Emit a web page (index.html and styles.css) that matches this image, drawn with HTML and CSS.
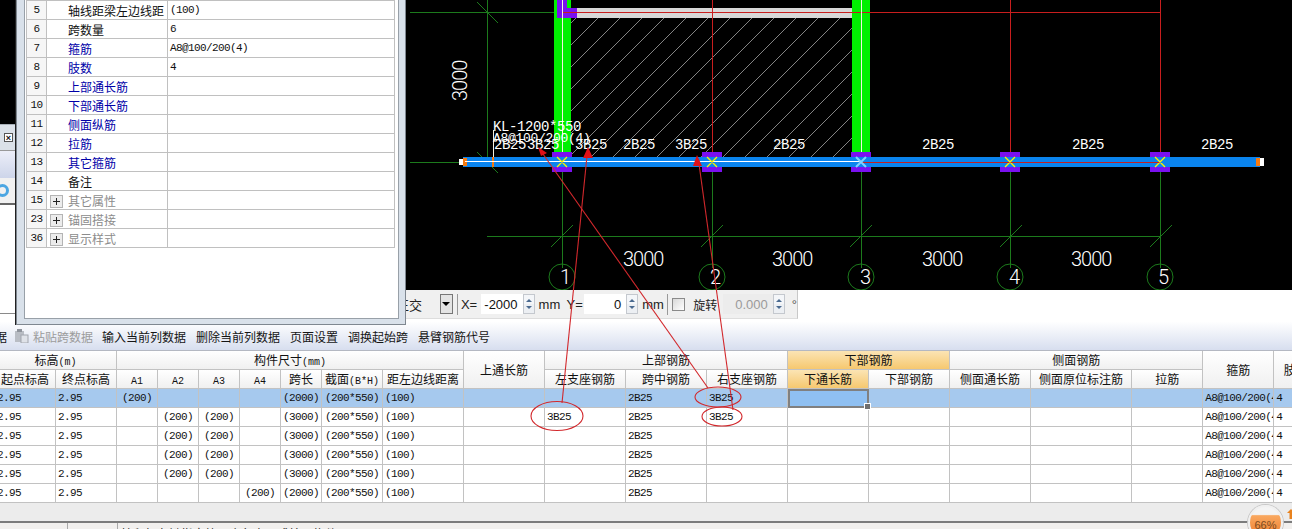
FILE: index.html
```html
<!DOCTYPE html>
<html lang="zh-CN">
<head>
    <meta charset="UTF-8">
    <title>梁平法表格</title>
    <link rel="stylesheet" href="styles.css">
</head>
<body>
    <div class="page">
        <!-- CAD view -->
        <svg class="cad" width="1292" height="290" viewBox="0 0 1292 290">
            <defs>
                <pattern id="hatch" patternUnits="userSpaceOnUse" width="22" height="22">
                    <line class="hatch-line" x1="0" y1="22" x2="22" y2="0"/>
                </pattern>
            </defs>

            <rect x="571" y="18" width="281" height="139" fill="url(#hatch)"/>

            <!-- axis lines -->
            <g class="axis">
                <line x1="487" y1="0" x2="487" y2="162"/>
                <line x1="410" y1="12" x2="562" y2="12"/>
                <line x1="410" y1="162" x2="460" y2="162"/>
                <line x1="562" y1="172" x2="562" y2="268"/>
                <line x1="712" y1="172" x2="712" y2="268"/>
                <line x1="861" y1="172" x2="861" y2="268"/>
                <line x1="1010" y1="172" x2="1010" y2="268"/>
                <line x1="1160" y1="172" x2="1160" y2="268"/>
                <line x1="487" y1="236" x2="1160" y2="236"/>
                <line x1="477" y1="2" x2="498" y2="23"/>
                <line x1="477" y1="152" x2="498" y2="173"/>
                <line x1="551" y1="247" x2="573" y2="225"/>
                <line x1="701" y1="247" x2="723" y2="225"/>
                <line x1="850" y1="247" x2="872" y2="225"/>
                <line x1="1000" y1="247" x2="1022" y2="225"/>
                <line x1="1150" y1="247" x2="1172" y2="225"/>
                <circle cx="562" cy="277" r="13"/>
                <circle cx="712" cy="277" r="13"/>
                <circle cx="861" cy="277" r="13"/>
                <circle cx="1010" cy="277" r="13"/>
                <circle cx="1160" cy="277" r="13"/>
            </g>

            <!-- columns and top beam -->
            <rect class="wall" x="554" y="0" width="17" height="157"/>
            <rect class="wall" x="852" y="0" width="18" height="157"/>
            <rect class="band" x="577" y="8" width="275" height="10"/>
            <rect class="post" x="557" y="8" width="20" height="10"/>
            <rect class="post" x="557" y="0" width="5" height="18"/>
            <rect class="post" x="563" y="0" width="4" height="8"/>
            <g class="red">
                <line x1="562" y1="12" x2="1160" y2="12"/>
                <line x1="712" y1="0" x2="712" y2="157"/>
                <line x1="1010" y1="0" x2="1010" y2="157"/>
                <line x1="1160" y1="0" x2="1160" y2="157"/>
            </g>
            <g class="white-line">
                <line x1="562" y1="0" x2="562" y2="157"/>
                <line x1="861" y1="0" x2="861" y2="157"/>
                <line x1="493" y1="130" x2="493" y2="157"/>
            </g>

            <!-- bottom beam -->
            <g class="post">
                <rect x="552" y="152" width="20" height="20"/>
                <rect x="702" y="152" width="20" height="20"/>
                <rect x="851" y="152" width="20" height="20"/>
                <rect x="1000" y="152" width="20" height="20"/>
                <rect x="1150" y="152" width="20" height="20"/>
            </g>
            <rect class="beam" x="463" y="157" width="797" height="10"/>
            <rect class="white-fill" x="459" y="159" width="4" height="6"/>
            <rect class="white-fill" x="1260" y="158" width="4" height="8"/>
            <rect class="orange" x="463" y="158" width="4" height="8"/>
            <rect class="orange" x="1256" y="158" width="4" height="8"/>
            <rect class="orange" x="492" y="157" width="2" height="10"/>
            <line class="white-line-thick" x1="465" y1="161.5" x2="861" y2="161.5"/>
            <g class="red">
                <line x1="861" y1="162" x2="1160" y2="162"/>
            </g>
            <path class="cross" d="M557 157l10 10m0-10l-10 10M707 157l10 10m0-10l-10 10M1005 157l10 10m0-10l-10 10M1155 157l10 10m0-10l-10 10"/>
            <path class="cross-blue" d="M856 157l10 10m0-10l-10 10"/>

            <!-- labels -->
            <text class="lbl" x="493" y="131">KL-1200*550</text>
            <text class="lbl lbl-sm" x="493" y="142">A8@100/200(4)</text>
            <text class="lbl" x="494" y="149">2B25</text>
            <text class="lbl" x="527" y="149">3B25</text>
            <text class="lbl" x="575" y="149">3B25</text>
            <text class="lbl" x="623" y="149">2B25</text>
            <text class="lbl" x="675" y="149">3B25</text>
            <text class="lbl" x="773" y="149">2B25</text>
            <text class="lbl" x="922" y="149">2B25</text>
            <text class="lbl" x="1072" y="149">2B25</text>
            <text class="lbl" x="1201" y="149">2B25</text>

            <text class="dim" x="623" y="266">3000</text>
            <text class="dim" x="772" y="266">3000</text>
            <text class="dim" x="922" y="266">3000</text>
            <text class="dim" x="1071" y="266">3000</text>
            <text class="dim" transform="translate(467 101) rotate(-90)">3000</text>

            <text class="dim dim-mid" x="565" y="284">1</text>
            <text class="dim dim-mid" x="715" y="284">2</text>
            <text class="dim dim-mid" x="865" y="284">3</text>
            <text class="dim dim-mid" x="1014" y="284">4</text>
            <text class="dim dim-mid" x="1163" y="284">5</text>
        </svg>

        <!-- coordinate bar -->
        <div class="coordbar">
            <span class="coord-text">正交</span>
            <span class="combo-btn"><i></i></span>
            <span class="bar-sep"></span>
            <span class="coord-text x-label">X=</span>
            <span class="spin x-spin"><b>-2000</b><span class="spin-btn"></span></span>
            <span class="coord-text unit">mm</span>
            <span class="coord-text y-label">Y=</span>
            <span class="spin y-spin"><b>0</b><span class="spin-btn"></span></span>
            <span class="coord-text unit">mm</span>
            <span class="bar-sep sep-right"></span>
            <span class="check"></span>
            <span class="coord-text rotate-label">旋转</span>
            <span class="spin rot-spin"><b>0.000</b><span class="spin-btn"></span></span>
            <span class="coord-text degree">°</span>
        </div>

        <!-- sheet toolbar -->
        <div class="toolbar">
            <span class="tool cut">数据</span>
            <svg class="tool-icon" width="15" height="14" viewBox="0 0 15 14">
                <rect x="1" y="2" width="9" height="11" fill="#b9bdc4"/>
                <rect x="3" y="0" width="5" height="3" fill="#8f949c"/>
                <rect x="7" y="6" width="7" height="8" fill="#dfe2e8" stroke="#a2a6ae"/>
            </svg>
            <span class="tool off">粘贴跨数据</span>
            <span class="tool">输入当前列数据</span>
            <span class="tool">删除当前列数据</span>
            <span class="tool">页面设置</span>
            <span class="tool">调换起始跨</span>
            <span class="tool">悬臂钢筋代号</span>
        </div>

        <!-- span table -->
        <div class="sheet">
            <table class="span-table">
                <colgroup>
                    <col class="w61"><col class="w61"><col class="w41"><col class="w41"><col class="w41"><col class="w41"><col class="w41"><col class="w61"><col class="w81">
                    <col class="w81"><col class="w81"><col class="w81"><col class="w81"><col class="w81"><col class="w81"><col class="w81"><col class="w101"><col class="w71"><col class="w71"><col class="w44">
                </colgroup>
                <thead>
                    <tr>
                        <th colspan="2">标高<small>(m)</small></th>
                        <th colspan="7">构件尺寸<small>(mm)</small></th>
                        <th rowspan="2">上通长筋</th>
                        <th colspan="3">上部钢筋</th>
                        <th colspan="2" class="hot">下部钢筋</th>
                        <th colspan="3">侧面钢筋</th>
                        <th rowspan="2">箍筋</th>
                        <th rowspan="2">肢数</th>
                    </tr>
                    <tr>
                        <th>起点标高</th><th>终点标高</th>
                        <th><small>A1</small></th><th><small>A2</small></th><th><small>A3</small></th><th><small>A4</small></th>
                        <th>跨长</th><th>截面<small>(B*H)</small></th><th>距左边线距离</th>
                        <th>左支座钢筋</th><th>跨中钢筋</th><th>右支座钢筋</th>
                        <th class="hot">下通长筋</th><th>下部钢筋</th>
                        <th>侧面通长筋</th><th>侧面原位标注筋</th><th>拉筋</th>
                    </tr>
                </thead>
                <tbody>
                    <tr class="selected">
                        <td>2.95</td><td>2.95</td><td class="c">(200)</td><td></td><td></td><td></td>
                        <td class="c">(2000)</td><td class="c">(200*550)</td><td>(100)</td>
                        <td></td><td></td><td>2B25</td><td>3B25</td>
                        <td class="active"></td><td></td><td></td><td></td><td></td>
                        <td>A8@100/200(4)</td><td>4</td>
                    </tr>
                    <tr>
                        <td>2.95</td><td>2.95</td><td></td><td class="c">(200)</td><td class="c">(200)</td><td></td>
                        <td class="c">(3000)</td><td class="c">(200*550)</td><td>(100)</td>
                        <td></td><td>3B25</td><td>2B25</td><td>3B25</td>
                        <td></td><td></td><td></td><td></td><td></td>
                        <td>A8@100/200(4)</td><td>4</td>
                    </tr>
                    <tr>
                        <td>2.95</td><td>2.95</td><td></td><td class="c">(200)</td><td class="c">(200)</td><td></td>
                        <td class="c">(3000)</td><td class="c">(200*550)</td><td>(100)</td>
                        <td></td><td></td><td>2B25</td><td></td>
                        <td></td><td></td><td></td><td></td><td></td>
                        <td>A8@100/200(4)</td><td>4</td>
                    </tr>
                    <tr>
                        <td>2.95</td><td>2.95</td><td></td><td class="c">(200)</td><td class="c">(200)</td><td></td>
                        <td class="c">(3000)</td><td class="c">(200*550)</td><td>(100)</td>
                        <td></td><td></td><td>2B25</td><td></td>
                        <td></td><td></td><td></td><td></td><td></td>
                        <td>A8@100/200(4)</td><td>4</td>
                    </tr>
                    <tr>
                        <td>2.95</td><td>2.95</td><td></td><td class="c">(200)</td><td class="c">(200)</td><td></td>
                        <td class="c">(3000)</td><td class="c">(200*550)</td><td>(100)</td>
                        <td></td><td></td><td>2B25</td><td></td>
                        <td></td><td></td><td></td><td></td><td></td>
                        <td>A8@100/200(4)</td><td>4</td>
                    </tr>
                    <tr>
                        <td>2.95</td><td>2.95</td><td></td><td></td><td></td><td class="c">(200)</td>
                        <td class="c">(2000)</td><td class="c">(200*550)</td><td>(100)</td>
                        <td></td><td></td><td>2B25</td><td></td>
                        <td></td><td></td><td></td><td></td><td></td>
                        <td>A8@100/200(4)</td><td>4</td>
                    </tr>
                </tbody>
            </table>
        </div>

        <div class="sheet-foot"></div>
        <div class="status">
            <span class="status-cell first"></span>
            <span class="status-cell mid"></span>
            <span class="status-text">按鼠标左键指定第一个角点，或拾取构件图元</span>
        </div>

        <!-- window behind the property dialog -->
        <div class="back-win">
            <div class="back-title"><span class="close-x">×</span></div>
            <div class="back-band"></div>
            <div class="back-tools"><span class="ring"></span></div>
            <div class="back-body"></div>
        </div>

        <!-- property dialog -->
        <div class="dialog">
            <div class="dialog-inner">
                <table class="prop-table">
                    <tr><td class="idx">5</td><td class="name">轴线距梁左边线距</td><td class="val">(100)</td></tr>
                    <tr><td class="idx">6</td><td class="name">跨数量</td><td class="val">6</td></tr>
                    <tr><td class="idx">7</td><td class="name blue">箍筋</td><td class="val">A8@100/200(4)</td></tr>
                    <tr><td class="idx">8</td><td class="name blue">肢数</td><td class="val">4</td></tr>
                    <tr><td class="idx">9</td><td class="name blue">上部通长筋</td><td class="val"></td></tr>
                    <tr><td class="idx">10</td><td class="name blue">下部通长筋</td><td class="val"></td></tr>
                    <tr><td class="idx">11</td><td class="name blue">侧面纵筋</td><td class="val"></td></tr>
                    <tr><td class="idx">12</td><td class="name blue">拉筋</td><td class="val"></td></tr>
                    <tr><td class="idx">13</td><td class="name blue">其它箍筋</td><td class="val"></td></tr>
                    <tr><td class="idx">14</td><td class="name">备注</td><td class="val"></td></tr>
                    <tr><td class="idx">15</td><td class="name grp"><span class="plus"></span>其它属性</td><td class="val"></td></tr>
                    <tr><td class="idx">23</td><td class="name grp"><span class="plus"></span>锚固搭接</td><td class="val"></td></tr>
                    <tr><td class="idx">36</td><td class="name grp"><span class="plus"></span>显示样式</td><td class="val"></td></tr>
                </table>
            </div>
        </div>

        <!-- red markup drawn over the screenshot -->
        <svg class="markup" width="1292" height="529" viewBox="0 0 1292 529">
            <ellipse cx="557" cy="416" rx="26" ry="14.5"/>
            <ellipse cx="718" cy="397" rx="23" ry="10"/>
            <ellipse cx="722" cy="416.5" rx="20" ry="9.5"/>
            <line x1="562" y1="403" x2="587" y2="156"/>
            <line x1="708" y1="388" x2="543" y2="154"/>
            <line x1="733" y1="410" x2="699" y2="164"/>
            <path class="head" d="M588 147l5 11h-10zM538 147l9 6-6 3zM697 155l5 11h-9z"/>
        </svg>

        <div class="badge"><span>66%</span></div>
        <svg class="up-arrow" width="8" height="10" viewBox="0 0 8 10"><path d="M4 0l4 4H5.5v6h-3V4H0z"/></svg>
    </div>
</body>
</html>
```

FILE: styles.css
```css
* {
    margin: 0;
    padding: 0;
    box-sizing: border-box;
}

html, body {
    width: 1292px;
    height: 529px;
    overflow: hidden;
    background: #fff;
}

body {
    font-family: "Noto Sans CJK SC", sans-serif;
    font-size: 12px;
    color: #111;
}

.page {
    position: relative;
    width: 1292px;
    height: 529px;
    overflow: hidden;
}

/* CAD view */
.cad {
    display: block;
    background: #000;
}

.axis line, .axis circle {
    stroke: #1c7a1c;
    stroke-width: 1;
    fill: none;
}

.axis line { shape-rendering: crispEdges; }

.hatch-line {
    stroke: #dcdcdc;
    stroke-width: 0.6;
}

.wall { fill: #00f000; }
.band { fill: #d8d8d8; }
.post { fill: #7a10f0; }
.beam { fill: #0a84ee; }
.white-fill { fill: #fff; }
.orange { fill: #f57a10; }

.red line {
    stroke: #c81e1e;
    stroke-width: 1;
    shape-rendering: crispEdges;
}

.white-line line {
    stroke: #f4f0e0;
    stroke-width: 1;
    shape-rendering: crispEdges;
}

.white-line-thick {
    stroke: #fff;
    stroke-width: 1.2;
}

.cross {
    stroke: #fff200;
    stroke-width: 1.4;
    fill: none;
}

.cross-blue {
    stroke: #7fd0ff;
    stroke-width: 2;
    fill: none;
}

.lbl {
    font-family: "Liberation Mono", monospace;
    font-size: 14px;
    fill: #fff;
    letter-spacing: -0.4px;
}

.lbl-sm {
    font-size: 13px;
    letter-spacing: -0.3px;
}

.dim {
    font-family: Roboto, "Liberation Sans", sans-serif;
    font-weight: 300;
    font-size: 20px;
    fill: #fff;
    letter-spacing: -1px;
}

.dim-mid { text-anchor: middle; }

/* coordinate bar */
.coordbar {
    display: flex;
    align-items: center;
    width: 798px;
    height: 29px;
    padding-left: 396px;
    background: #f0f0f0;
    border-right: 1px solid #c8c8c8;
    border-bottom: 1px solid #ddd;
    font-family: "Liberation Sans", "Noto Sans CJK SC", sans-serif;
    font-size: 13px;
}

.coord-text {
    color: #222;
    white-space: nowrap;
}

.combo-btn {
    display: flex;
    align-items: center;
    justify-content: center;
    width: 13px;
    height: 20px;
    margin-left: 18px;
    background: #e4e4e4;
    border: 1px solid #777;
}

.combo-btn i {
    border-left: 4px solid transparent;
    border-right: 4px solid transparent;
    border-top: 4px solid #000;
}

.bar-sep {
    width: 1px;
    height: 21px;
    margin-left: 4px;
    background: #999;
}

.x-label { margin-left: 3px; width: 20px; }
.unit { margin-left: 4px; width: 20px; }
.y-label { margin-left: 8px; width: 18px; }
.sep-right { margin-left: 5px; }

.spin {
    display: flex;
    align-items: center;
    justify-content: flex-end;
    height: 20px;
    background: #fff;
}

.spin b {
    font-weight: 400;
    padding-right: 5px;
}

.spin-btn {
    position: relative;
    width: 12px;
    height: 20px;
    background: linear-gradient(#f4f6f9 49%, #b8bcc4 49%, #b8bcc4 52%, #eceff3 52%);
    border: 1px solid #c4c8ce;
}

.spin-btn::before, .spin-btn::after {
    content: '';
    position: absolute;
    left: 2px;
    border-left: 3px solid transparent;
    border-right: 3px solid transparent;
}

.spin-btn::before { top: 4px; border-bottom: 3px solid #4a6a90; }
.spin-btn::after { bottom: 4px; border-top: 3px solid #4a6a90; }

.x-spin { width: 54px; }
.y-spin { width: 54px; }

.rot-spin {
    width: 62px;
    margin-left: 7px;
    background: #ececec;
    color: #9a9a9a;
}

.check {
    width: 13px;
    height: 13px;
    margin-left: 4px;
    background: linear-gradient(135deg, #d8d8d8, #fff);
    border: 1px solid #8a8a8a;
}

.rotate-label { margin-left: 8px; width: 23px; font-size: 12px; }
.degree { margin-left: 7px; color: #555; }

/* sheet toolbar */
.toolbar {
    display: flex;
    align-items: center;
    gap: 10px;
    height: 31px;
    padding: 3px 0 0 0;
    background: linear-gradient(#fff 8%, #d7deef);
    margin-left: 0;
}

.tool {
    white-space: nowrap;
    color: #151515;
}

.cut { margin-left: -17px; }
.tool.off { color: #9c9c9c; margin-left: -6px; }

.tool-icon { flex: none; margin-left: -3px; }

.tool + .tool:nth-child(4) { margin-left: -1px; }

/* span table */
.sheet {
    height: 153px;
    overflow: hidden;
    background: #fff;
    border-top: 1px solid #b4b8c2;
}

.span-table {
    table-layout: fixed;
    width: 1323px;
    margin-left: -5px;
    border-collapse: separate;
    border-spacing: 0;
}

.w44 { width: 44px; }
.w41 { width: 41px; }
.w61 { width: 61px; }
.w71 { width: 71px; }
.w81 { width: 81px; }
.w101 { width: 101px; }

.span-table tr { height: 19px; }

.span-table th, .span-table td {
    height: 19px;
    border-right: 1px solid #c2c2c2;
    border-bottom: 1px solid #c2c2c2;
    overflow: hidden;
    white-space: nowrap;
}

.span-table th {
    font-weight: 400;
    text-align: center;
    font-size: 12px;
    line-height: 16px;
    background: linear-gradient(#fff, #f0f0f0);
}

.span-table th small {
    font-family: "Liberation Mono", monospace;
    font-size: 10px;
    line-height: 10px;
}

.span-table th.hot {
    background: linear-gradient(#fbe4b4, #f6c86f);
}

.span-table td {
    padding-left: 2px;
    font-family: "Liberation Mono", monospace;
    font-size: 11px;
    letter-spacing: -0.6px;
    line-height: 16px;
}

.span-table td.c {
    padding-left: 0;
    text-align: center;
}

.span-table .selected td {
    background: #a6c9ee;
}

.span-table .selected td.active {
    position: relative;
    background: #8fc0f2;
    border: 2px solid #808080;
    overflow: visible;
}

.span-table .selected td.active::after {
    content: '';
    position: absolute;
    right: -4px;
    bottom: -4px;
    width: 5px;
    height: 5px;
    background: #707070;
    border: 1px solid #fff;
}

.sheet-foot {
    height: 18px;
    background: #ececec;
}

.status {
    display: flex;
    height: 8px;
    overflow: hidden;
    background: #f2f0ee;
    border-top: 2px solid #7c7c7c;
}

.status-cell {
    height: 8px;
    border-right: 1px solid #aaa;
}

.first { width: 68px; }
.mid { width: 50px; }

.status-text {
    margin-left: 3px;
    padding-top: 2px;
    line-height: 17px;
    height: 19px;
    color: #222;
}

/* window behind the dialog */
.back-win {
    position: absolute;
    left: 0;
    top: 124px;
    width: 17px;
    height: 198px;
    overflow: hidden;
    background: #fff;
}

.back-title {
    height: 26px;
    padding: 5px 0 0 4px;
    background: #dbe1e8;
    border-top: 1px solid #a8b0b8;
}

.close-x {
    display: block;
    width: 9px;
    height: 9px;
    margin-top: 3px;
    font: 700 9px/8px "Liberation Sans", sans-serif;
    text-align: center;
    background: #fff;
    border: 1px solid #555;
}

.back-band {
    height: 28px;
    background: linear-gradient(#eceef8, #cdd5ea);
    border-top: 1px solid #999;
}

.back-tools {
    height: 27px;
    padding-top: 6px;
    background: #f1f1f1;
    border-bottom: 2px solid #666;
}

.ring {
    display: block;
    width: 13px;
    height: 13px;
    margin-left: -4px;
    border: 3px solid #4ca6e2;
    border-radius: 50%;
}

.back-body {
    height: 109px;
    background: #fff;
    border-bottom: 1px solid #8a8a8a;
}

/* property dialog */
.dialog {
    position: absolute;
    left: 16px;
    top: 0;
    width: 390px;
    height: 325px;
    padding: 0 6px 5px 7px;
    background: #d9e1ea;
    border: 1px solid #7f8790;
    border-top: none;
    box-shadow: -1px 0 0 #222;
}

.dialog-inner {
    height: 100%;
    padding: 0 4px 0 1px;
    background: #fff;
    border: 1px solid #98a0a8;
    border-top: none;
}

.prop-table {
    width: 369px;
    table-layout: fixed;
    border-collapse: separate;
    border-spacing: 0;
    border-top: 1px solid #c0c0c0;
    border-left: 1px solid #c0c0c0;
}

.prop-table td {
    height: 19px;
    padding-top: 1px;
    border-right: 1px solid #c0c0c0;
    border-bottom: 1px solid #c0c0c0;
    overflow: hidden;
    white-space: nowrap;
    line-height: 17px;
}

.idx {
    width: 20px;
    background: #f6f6f6;
    text-align: center;
    font-family: "Liberation Mono", monospace;
    font-size: 11px;
    letter-spacing: -0.6px;
}

.name {
    width: 121px;
    padding-left: 21px;
    font-size: 12px;
}

.name.blue { color: #0000a8; }

.name.grp {
    padding-left: 3px;
    color: #8c8c8c;
}

.val {
    padding-left: 2px;
    font-family: "Liberation Mono", monospace;
    font-size: 11px;
    letter-spacing: -0.6px;
}

.plus {
    position: relative;
    display: inline-block;
    width: 13px;
    height: 13px;
    margin-right: 5px;
    vertical-align: -2px;
    background: #ececec;
    border: 1px solid #b4b4b4;
}

.plus::before, .plus::after {
    content: '';
    position: absolute;
    background: #222;
}

.plus::before { left: 2px; top: 5px; width: 7px; height: 1px; }
.plus::after { left: 5px; top: 2px; width: 1px; height: 7px; }

/* red markup */
.markup {
    position: absolute;
    left: 0;
    top: 0;
    pointer-events: none;
}

.markup ellipse, .markup line {
    fill: none;
    stroke: #d2282c;
    stroke-width: 1.1;
}

.markup .head {
    fill: #e01018;
}

/* speed badge */
.badge {
    position: absolute;
    left: 1248px;
    top: 505px;
    width: 35px;
    height: 35px;
    padding-top: 11px;
    text-align: center;
    font: 11px/14px "Liberation Sans", sans-serif;
    color: #7a4a20;
    background: linear-gradient(#f4f4f4 24%, #f9a860 28%, #ee7a28);
    border: 2px solid #f0f0f0;
    border-radius: 50%;
    box-shadow: 0 0 0 1px #c8c8c8;
}

.up-arrow {
    position: absolute;
    left: 1287px;
    top: 509px;
    fill: #e8821e;
}
```
